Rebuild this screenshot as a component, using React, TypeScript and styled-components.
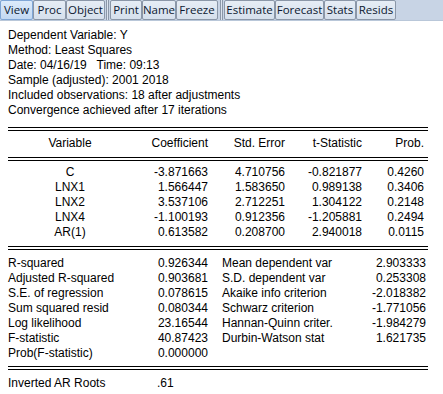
import React from 'react';
import styled, { createGlobalStyle } from 'styled-components';

const GlobalStyle = createGlobalStyle`
  html, body {
    margin: 0;
    padding: 0;
    background: #ffffff;
  }
  body {
    font-family: "Liberation Sans", Arial, sans-serif;
    font-size: 12px;
    color: #000;
  }
`;

const Window = styled.div`
  width: 443px;
  height: 394px;
  overflow: hidden;
  background: #fff;
`;

const Toolbar = styled.div`
  display: flex;
  align-items: stretch;
  height: 21px;
  background: #c8d4e5;
  border-bottom: 1px solid #b9c7d9;
  box-sizing: border-box;
`;

const ToolButton = styled.div<{ $w: number; $active?: boolean }>`
  display: flex;
  align-items: center;
  justify-content: center;
  width: ${p => p.$w}px;
  height: 20px;
  padding-bottom: 1px;
  box-sizing: border-box;
  font-family: "Open Sans", "Segoe UI", sans-serif;
  font-size: 11.5px;
  color: #0c1830;
  white-space: nowrap;
  border: 1px solid ${p => (p.$active ? '#7fa6d6' : '#8b97a8')};
  border-radius: 2px;
  background: ${p =>
    p.$active
      ? 'linear-gradient(#dcebfb, #c3d9f2)'
      : 'linear-gradient(#e6edf5, #d6e0ec)'};
`;

const Separator = styled.div<{ $w: number }>`
  width: ${p => p.$w}px;
  height: 20px;
  box-sizing: border-box;
  display: flex;
  justify-content: center;

  &::after {
    content: '';
    width: 3px;
    height: 100%;
    box-sizing: border-box;
    border-left: 1px solid #8b97a8;
    border-right: 1px solid #8b97a8;
    background: #dbe3ee;
  }
`;

const Output = styled.div`
  padding: 7px 0 0 8px;
`;

const InfoLine = styled.div`
  height: 15px;
  line-height: 15px;
  white-space: pre;
`;

const DoubleRule = styled.div<{ $top: number }>`
  width: 420px;
  height: 2px;
  margin-top: ${p => p.$top}px;
  border-top: 1px solid #000;
  border-bottom: 1px solid #000;
`;

const CoefGrid = styled.div<{ $pad: string }>`
  display: grid;
  grid-template-columns: 124px 76px 77px 77px 62px;
  padding: ${p => p.$pad};
`;

const Cell = styled.div<{ $align?: 'left' | 'center' | 'right' }>`
  height: 15px;
  line-height: 15px;
  white-space: pre;
  text-align: ${p => p.$align || 'right'};
`;

const StatsGrid = styled.div`
  display: grid;
  grid-template-columns: 140px 60px 14px 150px 54px;
  padding: 6px 0 0 0;
`;

const RootsRow = styled.div`
  display: grid;
  grid-template-columns: 149px auto;
  padding-top: 6px;
`;

type Tool = { label: string; w: number; active?: boolean } | { sep: number };

const tools: Tool[] = [
  { label: 'View', w: 33, active: true },
  { label: 'Proc', w: 33 },
  { label: 'Object', w: 39 },
  { sep: 5 },
  { label: 'Print', w: 32 },
  { label: 'Name', w: 34 },
  { label: 'Freeze', w: 42 },
  { sep: 6 },
  { label: 'Estimate', w: 51 },
  { label: 'Forecast', w: 49 },
  { label: 'Stats', w: 32 },
  { label: 'Resids', w: 40 },
];

const coefs = [
  ['C', '-3.871663', '4.710756', '-0.821877', '0.4260'],
  ['LNX1', '1.566447', '1.583650', '0.989138', '0.3406'],
  ['LNX2', '3.537106', '2.712251', '1.304122', '0.2148'],
  ['LNX4', '-1.100193', '0.912356', '-1.205881', '0.2494'],
  ['AR(1)', '0.613582', '0.208700', '2.940018', '0.0115'],
];

const stats: [string, string, string, string][] = [
  ['R-squared', '0.926344', 'Mean dependent var', '2.903333'],
  ['Adjusted R-squared', '0.903681', 'S.D. dependent var', '0.253308'],
  ['S.E. of regression', '0.078615', 'Akaike info criterion', '-2.018382'],
  ['Sum squared resid', '0.080344', 'Schwarz criterion', '-1.771056'],
  ['Log likelihood', '23.16544', 'Hannan-Quinn criter.', '-1.984279'],
  ['F-statistic', '40.87423', 'Durbin-Watson stat', '1.621735'],
  ['Prob(F-statistic)', '0.000000', '', ''],
];

const App = () => {
  return (
    <Window>
      <GlobalStyle />
      <Toolbar>
        {tools.map((t, i) =>
          'sep' in t ? (
            <Separator key={i} $w={t.sep} />
          ) : (
            <ToolButton key={t.label} $w={t.w} $active={t.active}>
              {t.label}
            </ToolButton>
          )
        )}
      </Toolbar>
      <Output>
        <InfoLine>Dependent Variable: Y</InfoLine>
        <InfoLine>Method: Least Squares</InfoLine>
        <InfoLine>{'Date: 04/16/19   Time: 09:13'}</InfoLine>
        <InfoLine>Sample (adjusted): 2001 2018</InfoLine>
        <InfoLine>Included observations: 18 after adjustments</InfoLine>
        <InfoLine>Convergence achieved after 17 iterations</InfoLine>

        <DoubleRule $top={9} />
        <CoefGrid $pad="5px 0 6px 0">
          <Cell $align="center">Variable</Cell>
          <Cell>Coefficient</Cell>
          <Cell>Std. Error</Cell>
          <Cell>t-Statistic</Cell>
          <Cell>Prob.</Cell>
        </CoefGrid>
        <DoubleRule $top={0} />
        <CoefGrid $pad="4px 0 0 0">
          {coefs.map(row =>
            row.map((v, i) => (
              <Cell key={row[0] + i} $align={i === 0 ? 'center' : 'right'}>
                {v}
              </Cell>
            ))
          )}
        </CoefGrid>

        <DoubleRule $top={6} />
        <StatsGrid>
          {stats.map(r => (
            <React.Fragment key={r[0]}>
              <Cell $align="left">{r[0]}</Cell>
              <Cell>{r[1]}</Cell>
              <span />
              <Cell $align="left">{r[2]}</Cell>
              <Cell>{r[3]}</Cell>
            </React.Fragment>
          ))}
        </StatsGrid>

        <DoubleRule $top={5} />
        <RootsRow>
          <Cell $align="left">Inverted AR Roots</Cell>
          <Cell $align="left">.61</Cell>
        </RootsRow>
      </Output>
    </Window>
  );
};

export default App;
